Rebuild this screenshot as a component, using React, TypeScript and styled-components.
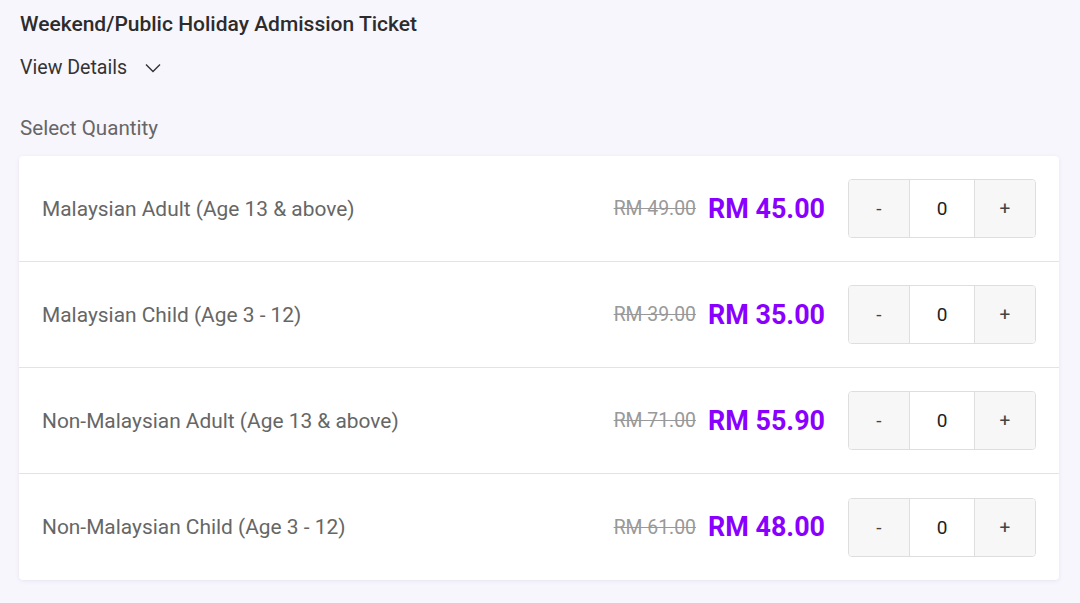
import React, { useState } from 'react';
import styled, { createGlobalStyle } from 'styled-components';

const GlobalStyle = createGlobalStyle`
  html, body {
    margin: 0;
    padding: 0;
    background: #f8f6fd;
    font-family: Roboto, "Liberation Sans", Arial, sans-serif;
  }
`;

const Page = styled.div`
  padding: 11px 21px 23px 19px;
`;

const Title = styled.h2`
  margin: 0 0 0 1px;
  font-size: 21px;
  font-weight: 500;
  color: #2c2c2c;
  line-height: 26px;
`;

const DetailsToggle = styled.button`
  display: flex;
  align-items: center;
  gap: 18px;
  margin-top: 19px;
  padding: 0 0 0 1px;
  border: none;
  background: none;
  font-family: inherit;
  font-size: 19.6px;
  color: #333;
  line-height: 24px;
  cursor: pointer;
`;

const SectionLabel = styled.div`
  margin: 36px 0 16px 1px;
  font-size: 20.6px;
  color: #666;
  line-height: 24px;
`;

const Card = styled.div`
  background: #fff;
  border-radius: 4px;
  box-shadow: 0 1px 4px rgba(80, 70, 120, 0.1);
`;

const Row = styled.div<{ $last: boolean }>`
  display: flex;
  align-items: center;
  height: 106px;
  padding: 0 23px;
  box-sizing: border-box;
  border-bottom: ${(p) => (p.$last ? 'none' : '1px solid #e2e2e8')};
`;

const Label = styled.div`
  flex: 1;
  font-size: 20.9px;
  color: #666;
`;

const OldPrice = styled.span`
  font-size: 19.4px;
  color: #999;
  text-decoration: line-through;
  margin-right: 12px;
`;

const Price = styled.span`
  font-size: 26.9px;
  font-weight: 700;
  color: #8a00ff;
  margin-right: 23px;
`;

const Stepper = styled.div`
  display: flex;
  height: 59px;
  border: 1px solid #dedede;
  border-radius: 4px;
  overflow: hidden;
  box-sizing: border-box;
`;

const StepButton = styled.button`
  width: 60px;
  border: none;
  background: #f7f7f7;
  font-family: inherit;
  font-size: 19px;
  color: #444;
  cursor: pointer;
`;

const Count = styled.input`
  width: 66px;
  border: none;
  border-left: 1px solid #dedede;
  border-right: 1px solid #dedede;
  text-align: center;
  font-family: inherit;
  font-size: 19px;
  color: #222;
  outline: none;
  box-sizing: border-box;
`;

const tickets = [
  { label: 'Malaysian Adult (Age 13 & above)', old: 'RM 49.00', price: 'RM 45.00' },
  { label: 'Malaysian Child (Age 3 - 12)', old: 'RM 39.00', price: 'RM 35.00' },
  { label: 'Non-Malaysian Adult (Age 13 & above)', old: 'RM 71.00', price: 'RM 55.90' },
  { label: 'Non-Malaysian Child (Age 3 - 12)', old: 'RM 61.00', price: 'RM 48.00' },
];

const App: React.FC = () => {
  const [counts, setCounts] = useState<number[]>(tickets.map(() => 0));

  const change = (i: number, d: number) => {
    setCounts((c) => c.map((v, j) => (j === i ? Math.max(0, v + d) : v)));
  };

  return (
    <Page>
      <GlobalStyle />
      <Title>Weekend/Public Holiday Admission Ticket</Title>
      <DetailsToggle>
        View Details
        <svg width="16" height="10" viewBox="0 0 16 10" fill="none">
          <path d="M1 1.5l7 7 7-7" stroke="#333" strokeWidth="1.4" />
        </svg>
      </DetailsToggle>
      <SectionLabel>Select Quantity</SectionLabel>
      <Card>
        {tickets.map((t, i) => (
          <Row key={t.label} $last={i === tickets.length - 1}>
            <Label>{t.label}</Label>
            <OldPrice>{t.old}</OldPrice>
            <Price>{t.price}</Price>
            <Stepper>
              <StepButton onClick={() => change(i, -1)}>-</StepButton>
              <Count value={counts[i]} readOnly />
              <StepButton onClick={() => change(i, 1)}>+</StepButton>
            </Stepper>
          </Row>
        ))}
      </Card>
    </Page>
  );
};

export default App;
